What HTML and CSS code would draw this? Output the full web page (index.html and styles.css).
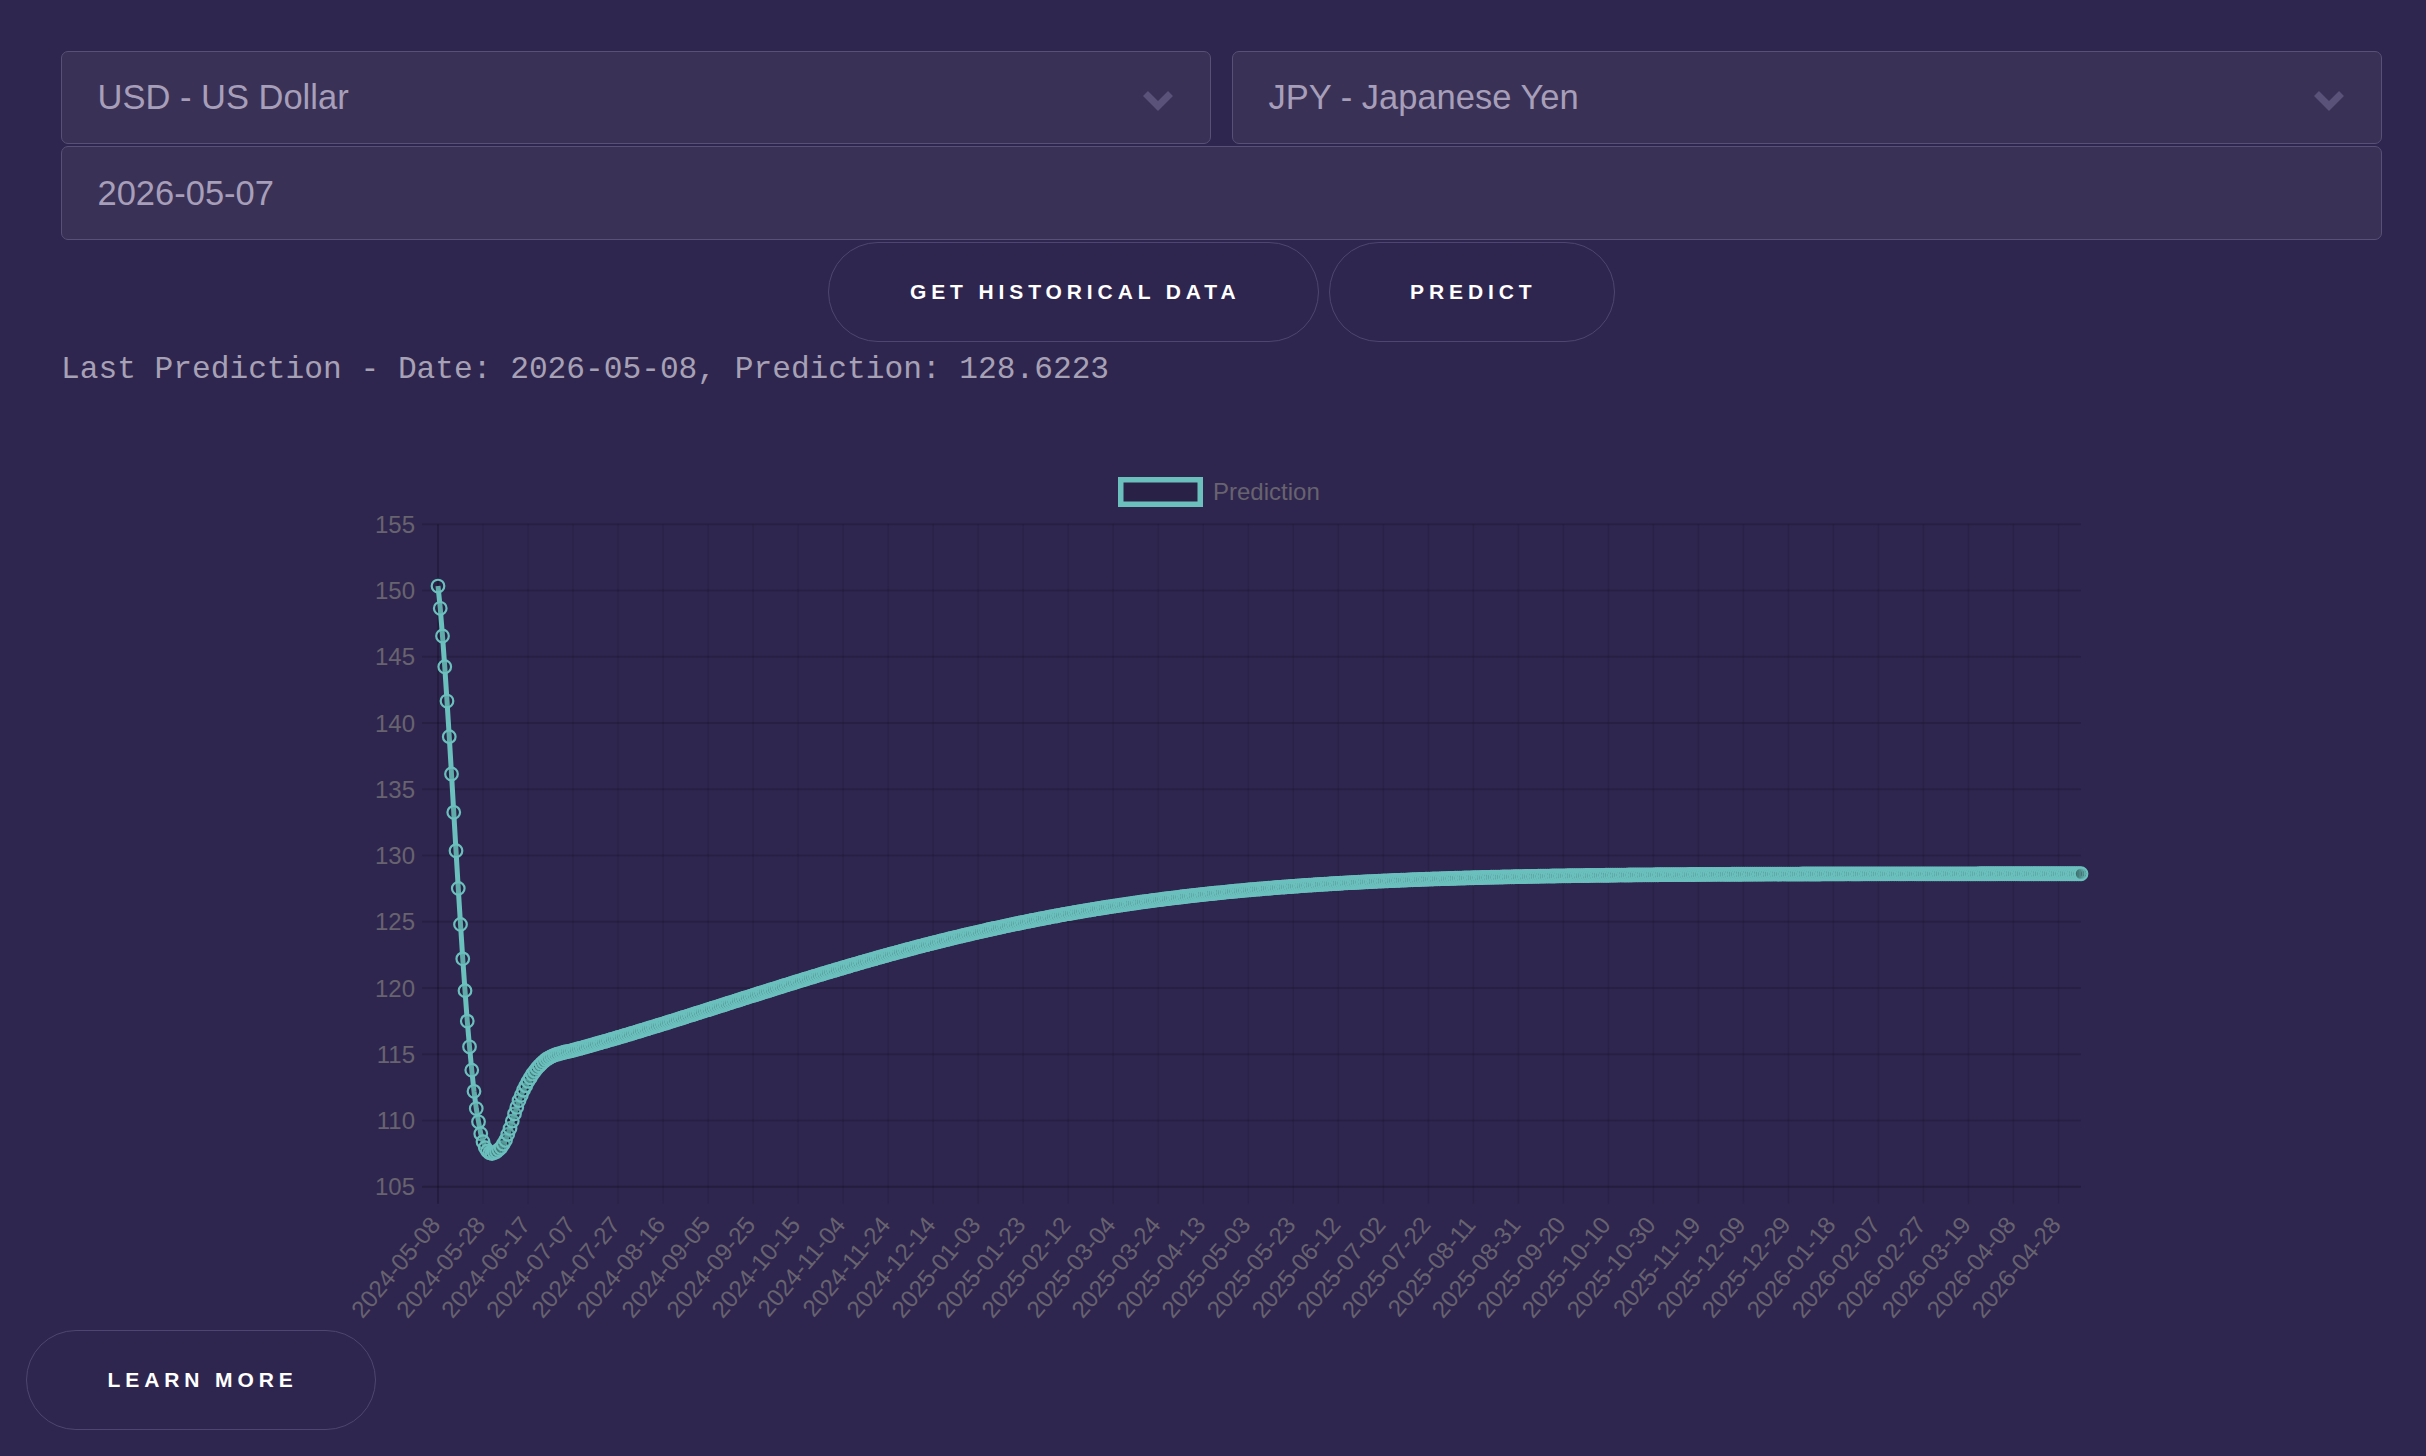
FILE: index.html
```html
<!DOCTYPE html>
<html lang="en">
<head>
<meta charset="utf-8">
<title>Currency Prediction</title>
<link rel="stylesheet" href="styles.css">
</head>
<body>
<div class="page">
  <main class="main">
    <div class="form">
      <div class="select-row">
        <div class="field select">
          <span class="field-text">USD - US Dollar</span>
          <svg class="chevron" viewBox="0 0 32 21" width="32" height="21"><polyline points="3.5,3.5 16,16 28.5,3.5"/></svg>
        </div>
        <div class="field select">
          <span class="field-text">JPY - Japanese Yen</span>
          <svg class="chevron" viewBox="0 0 32 21" width="32" height="21"><polyline points="3.5,3.5 16,16 28.5,3.5"/></svg>
        </div>
      </div>
      <div class="field date"><span class="field-text">2026-05-07</span></div>
    </div>

    <div class="actions">
      <button class="pill pill-wide">Get Historical Data</button>
      <button class="pill">Predict</button>
    </div>

    <p class="last-prediction">Last Prediction - Date: 2026-05-08, Prediction: 128.6223</p>

    <div class="chart-wrap">
      <svg id="chart" class="chart" viewBox="61 440 2321 890" width="2321" height="890">
        <g id="grid"></g>
        <g class="legend">
          <rect class="legend-box" x="1120.75" y="479.75" width="79.5" height="24.5"/>
          <text class="legend-label" x="1213" y="500">Prediction</text>
        </g>
        <g class="y-labels">
          <text x="415" y="524.3">155</text>
          <text x="415" y="590.5">150</text>
          <text x="415" y="656.8">145</text>
          <text x="415" y="723.0">140</text>
          <text x="415" y="789.3">135</text>
          <text x="415" y="855.5">130</text>
          <text x="415" y="921.7">125</text>
          <text x="415" y="988.0">120</text>
          <text x="415" y="1054.2">115</text>
          <text x="415" y="1120.5">110</text>
          <text x="415" y="1186.7">105</text>
        </g>
        <g id="xLabels" class="x-labels"></g>
        <g id="series"></g>
      </svg>
    </div>
  </main>

  <footer class="footer">
    <button class="pill">Learn More</button>
  </footer>
</div>
<script src="script.js"></script>
</body>
</html>
```

FILE: styles.css
```css
* {
  box-sizing: border-box;
}

html,
body {
  margin: 0;
  background: #2f264f;
}

body {
  min-height: 100vh;
  font-family: "Liberation Sans", Arial, sans-serif;
}

.page {
  padding: 51px 44px 0 26px;
}

.main {
  margin-left: 35px;
}

.form {
  display: flex;
  flex-direction: column;
  gap: 2px;
}

.select-row {
  display: flex;
  gap: 21px;
}

.field {
  display: flex;
  align-items: center;
  height: 93px;
  padding: 0 36.5px 0 35.5px;
  background: #3a3156;
  border: 1.5px solid #585075;
  border-radius: 7px;
  color: #a79fba;
  font-size: 34.5px;
}

.select {
  flex: 1 1 0;
  justify-content: space-between;
}

.date {
  height: 94px;
}

.chevron {
  display: block;
  margin-top: 5px;
  overflow: visible;
}

.chevron polyline {
  fill: none;
  stroke: #5b5279;
  stroke-width: 7;
  stroke-linejoin: miter;
}

.actions {
  display: flex;
  justify-content: center;
  gap: 10px;
  margin-top: 2px;
}

.pill {
  height: 100px;
  padding: 0 77px 0 80.5px;
  background: transparent;
  border: 1.5px solid #4e4670;
  border-radius: 999px;
  color: #ffffff;
  font-family: "Liberation Sans", Arial, sans-serif;
  font-weight: 700;
  font-size: 21px;
  letter-spacing: 4.9px;
  text-transform: uppercase;
  cursor: pointer;
}

.last-prediction {
  margin: 10px 0 0;
  font-family: "Liberation Mono", "Courier New", monospace;
  font-size: 31.2px;
  line-height: normal;
  color: #a7a1b6;
  white-space: pre;
}

.chart-wrap {
  margin-top: 53px;
}

.chart {
  display: block;
  width: 2321px;
  height: 890px;
  overflow: visible;
}

.chart text {
  font-family: "Liberation Sans", Arial, sans-serif;
  font-size: 24px;
  fill: #67636f;
}

.y-labels text {
  text-anchor: end;
  dominant-baseline: central;
}

.x-labels text {
  text-anchor: end;
  dominant-baseline: central;
}

.legend-box {
  fill: rgba(0, 0, 0, 0.1);
  stroke: #6bc0be;
  stroke-width: 5.5;
}

.grid-v {
  stroke: rgba(0, 0, 0, 0.1);
  stroke-width: 1.5;
}

.grid-h {
  stroke: rgba(0, 0, 0, 0.14);
  stroke-width: 2;
}

.axis-line {
  stroke: rgba(0, 0, 0, 0.22);
  stroke-width: 2;
}

.series-line {
  fill: none;
  stroke: #6bc0be;
  stroke-width: 5;
  stroke-linejoin: round;
}

.series-point {
  fill: rgba(0, 0, 0, 0.1);
  stroke: #6bc0be;
  stroke-width: 2.2;
}

.footer {
  display: flex;
}
```

FILE: script.js
```js
(function () {
  var NS = 'http://www.w3.org/2000/svg';
  var X0 = 438, X1 = 2081, N = 730;
  var TOP = 524.3, STEP = 66.24;
  var PX = STEP / 5;
  var DX = (X1 - X0) / N;
  var BOTTOM = TOP + STEP * 10;

  function el(name, attrs, parent) {
    var e = document.createElementNS(NS, name);
    for (var k in attrs) e.setAttribute(k, attrs[k]);
    if (parent) parent.appendChild(e);
    return e;
  }
  function yOf(v) { return TOP + (155 - v) * PX; }
  function pad(n) { return n < 10 ? '0' + n : '' + n; }

  var grid = document.getElementById('grid');
  var t, x, y, j;
  for (t = 0; t <= 720; t += 20) {
    x = X0 + t * DX;
    el('line', { x1: x, x2: x, y1: TOP, y2: BOTTOM + 17, 'class': t === 0 ? 'axis-line' : 'grid-v' }, grid);
  }
  for (j = 0; j <= 10; j++) {
    y = TOP + j * STEP;
    el('line', { x1: X0 - 16, x2: X1, y1: y, y2: y, 'class': j === 10 ? 'axis-line' : 'grid-h' }, grid);
  }

  var xl = document.getElementById('xLabels');
  var start = Date.UTC(2024, 4, 8);
  for (t = 0; t <= 720; t += 20) {
    var d = new Date(start + t * 86400000);
    var s = d.getUTCFullYear() + '-' + pad(d.getUTCMonth() + 1) + '-' + pad(d.getUTCDate());
    x = X0 + t * DX - 3;
    var tx = el('text', { x: 0, y: 0, transform: 'translate(' + x.toFixed(1) + ' 1220) rotate(-50)' }, xl);
    tx.textContent = s;
  }

  var head = [150.34, 148.66, 146.57, 144.25, 141.66, 138.97, 136.15, 133.26, 130.36, 127.52,
    124.8, 122.2, 119.8, 117.5, 115.56, 113.8, 112.2, 110.9, 109.9, 109.0,
    108.4, 107.95, 107.7, 107.55, 107.5];
  var knots = [[24, 107.5], [26, 107.65], [28, 107.95], [30, 108.5], [32, 109.4], [34, 110.5],
    [36, 111.5], [38, 112.3], [40, 112.95], [42, 113.5], [44, 113.95], [46, 114.3],
    [48, 114.6], [50, 114.8], [52, 114.95], [54, 115.05], [56, 115.15], [58, 115.22], [60, 115.3]];

  function val(i) {
    if (i <= 24) return head[i];
    if (i <= 60) {
      for (var k = 0; k < knots.length - 1; k++) {
        var a = knots[k], b = knots[k + 1];
        if (i >= a[0] && i <= b[0]) {
          return a[1] + (b[1] - a[1]) * (i - a[0]) / (b[0] - a[0]);
        }
      }
    }
    var dd = i - 60;
    return 128.625 - 13.325 * Math.exp(-(0.00345 * dd + 1.5e-5 * dd * dd));
  }

  var pts = [];
  for (var i = 0; i <= N; i++) {
    pts.push([X0 + i * DX, yOf(val(i))]);
  }
  var series = document.getElementById('series');
  el('polyline', {
    points: pts.map(function (p) { return p[0].toFixed(2) + ',' + p[1].toFixed(2); }).join(' '),
    'class': 'series-line'
  }, series);
  pts.forEach(function (p) {
    el('circle', { cx: p[0].toFixed(2), cy: p[1].toFixed(2), r: 6.3, 'class': 'series-point' }, series);
  });
})();
```
